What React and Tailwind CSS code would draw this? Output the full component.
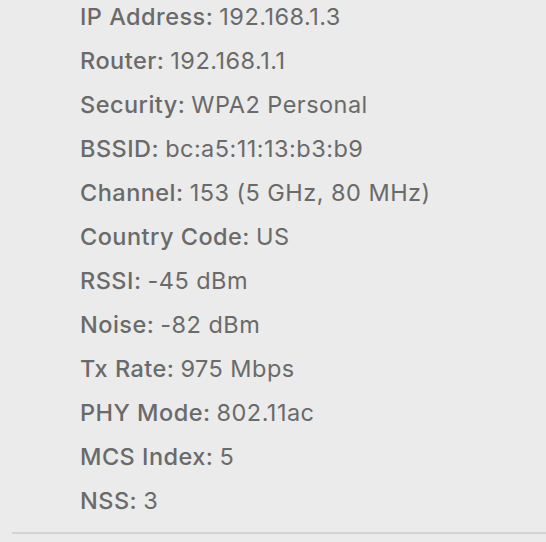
// Wi-Fi details list - label/value rows with a divider below.

const ROWS = [
  ['IP Address', '192.168.1.3'],
  ['Router', '192.168.1.1'],
  ['Security', 'WPA2 Personal'],
  ['BSSID', 'bc:a5:11:13:b3:b9'],
  ['Channel', '153 (5 GHz, 80 MHz)'],
  ['Country Code', 'US'],
  ['RSSI', '-45 dBm'],
  ['Noise', '-82 dBm'],
  ['Tx Rate', '975 Mbps'],
  ['PHY Mode', '802.11ac'],
  ['MCS Index', '5'],
  ['NSS', '3'],
]

export default function App() {
  return (
    <div className="w-[546px] h-[542px] overflow-hidden bg-[#ebebeb] font-['Inter',sans-serif] text-[#6a6a6a]">
      <div className="-mt-[5px] pl-[80px] flex flex-col">
        {ROWS.map(([label, value]) => (
          <Row key={label} label={label} value={value}/>
        ))}
      </div>
      <div className="ml-[12px] mt-[9px] h-[2px] bg-[#d3d3d3]"/>
    </div>
  )
}

// ─────────────────────────────────────────────────────────
function Row({ label, value }) {
  return (
    <div className="h-[44px] flex items-center text-[23.5px] tracking-[0.02em] whitespace-nowrap">
      <span className="font-medium">{label}:</span>
      <span className="ml-[6px]">{value}</span>
    </div>
  )
}
